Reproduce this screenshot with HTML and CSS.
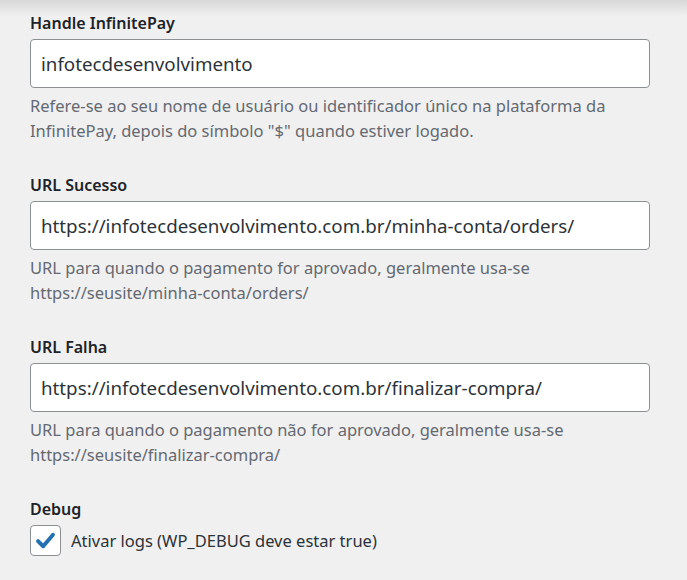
FILE: index.html
```html
<!DOCTYPE html>
<html lang="pt-BR">
<head>
<meta charset="utf-8">
<title>InfinitePay</title>
<link rel="stylesheet" href="styles.css">
</head>
<body>
<div class="page">
  <div class="field">
    <label class="label" for="handle">Handle InfinitePay</label>
    <input class="input" id="handle" type="text" value="infotecdesenvolvimento">
    <p class="desc">Refere-se ao seu nome de usuário ou identificador único na plataforma da InfinitePay, depois do símbolo "$" quando estiver logado.</p>
  </div>
  <div class="field">
    <label class="label" for="ok">URL Sucesso</label>
    <input class="input" id="ok" type="text" value="https://infotecdesenvolvimento.com.br/minha-conta/orders/">
    <p class="desc">URL para quando o pagamento for aprovado, geralmente usa-se https://seusite/minha-conta/orders/</p>
  </div>
  <div class="field">
    <label class="label" for="fail">URL Falha</label>
    <input class="input" id="fail" type="text" value="https://infotecdesenvolvimento.com.br/finalizar-compra/">
    <p class="desc">URL para quando o pagamento não for aprovado, geralmente usa-se https://seusite/finalizar-compra/</p>
  </div>
  <div class="field">
    <span class="label">Debug</span>
    <label class="check">
      <span class="box"><svg viewBox="0 0 20 20" width="23" height="23"><path d="M3.5 10.5 L8 15 L16.5 5" fill="none" stroke="#2271b1" stroke-width="3.4" stroke-linecap="round" stroke-linejoin="round"/></svg></span>
      <span class="check-text">Ativar logs (WP_DEBUG deve estar true)</span>
    </label>
  </div>
</div>
</body>
</html>
```
FILE: styles.css
```css
html, body {
  margin: 0;
  padding: 0;
}
body {
  background: linear-gradient(#d8d8d9 0px, #f0f0f1 16px) no-repeat, #f0f0f1;
  font-family: "Noto Sans", "Open Sans", sans-serif;
  color: #1d2327;
  width: 687px;
  height: 580px;
  overflow: hidden;
}
.page {
  padding: 11px 37px 0 30px;
  display: flex;
  flex-direction: column;
  gap: 30px;
}
.field {
  display: flex;
  flex-direction: column;
}
.label {
  display: block;
  font-size: 16px;
  font-weight: 600;
  line-height: 24px;
  margin-bottom: 4px;
  color: #1d2327;
}
.input {
  box-sizing: border-box;
  width: 620px;
  height: 49px;
  margin: 0;
  padding: 0 10px;
  border: 1px solid #8c8f94;
  border-radius: 4px;
  background: #fff;
  font-family: inherit;
  font-size: 18.75px;
  color: #2c3338;
  outline: none;
}
.desc {
  margin: 5px 0 0;
  font-size: 16.5px;
  line-height: 25px;
  color: #646970;
}
.check {
  display: flex;
  align-items: center;
  gap: 10px;
}
.box {
  box-sizing: border-box;
  width: 31px;
  height: 31px;
  border: 1px solid #8c8f94;
  border-radius: 4px;
  background: #fff;
  display: flex;
  align-items: center;
  justify-content: center;
}
.check-text {
  font-size: 16.5px;
  color: #2c3338;
}
```
